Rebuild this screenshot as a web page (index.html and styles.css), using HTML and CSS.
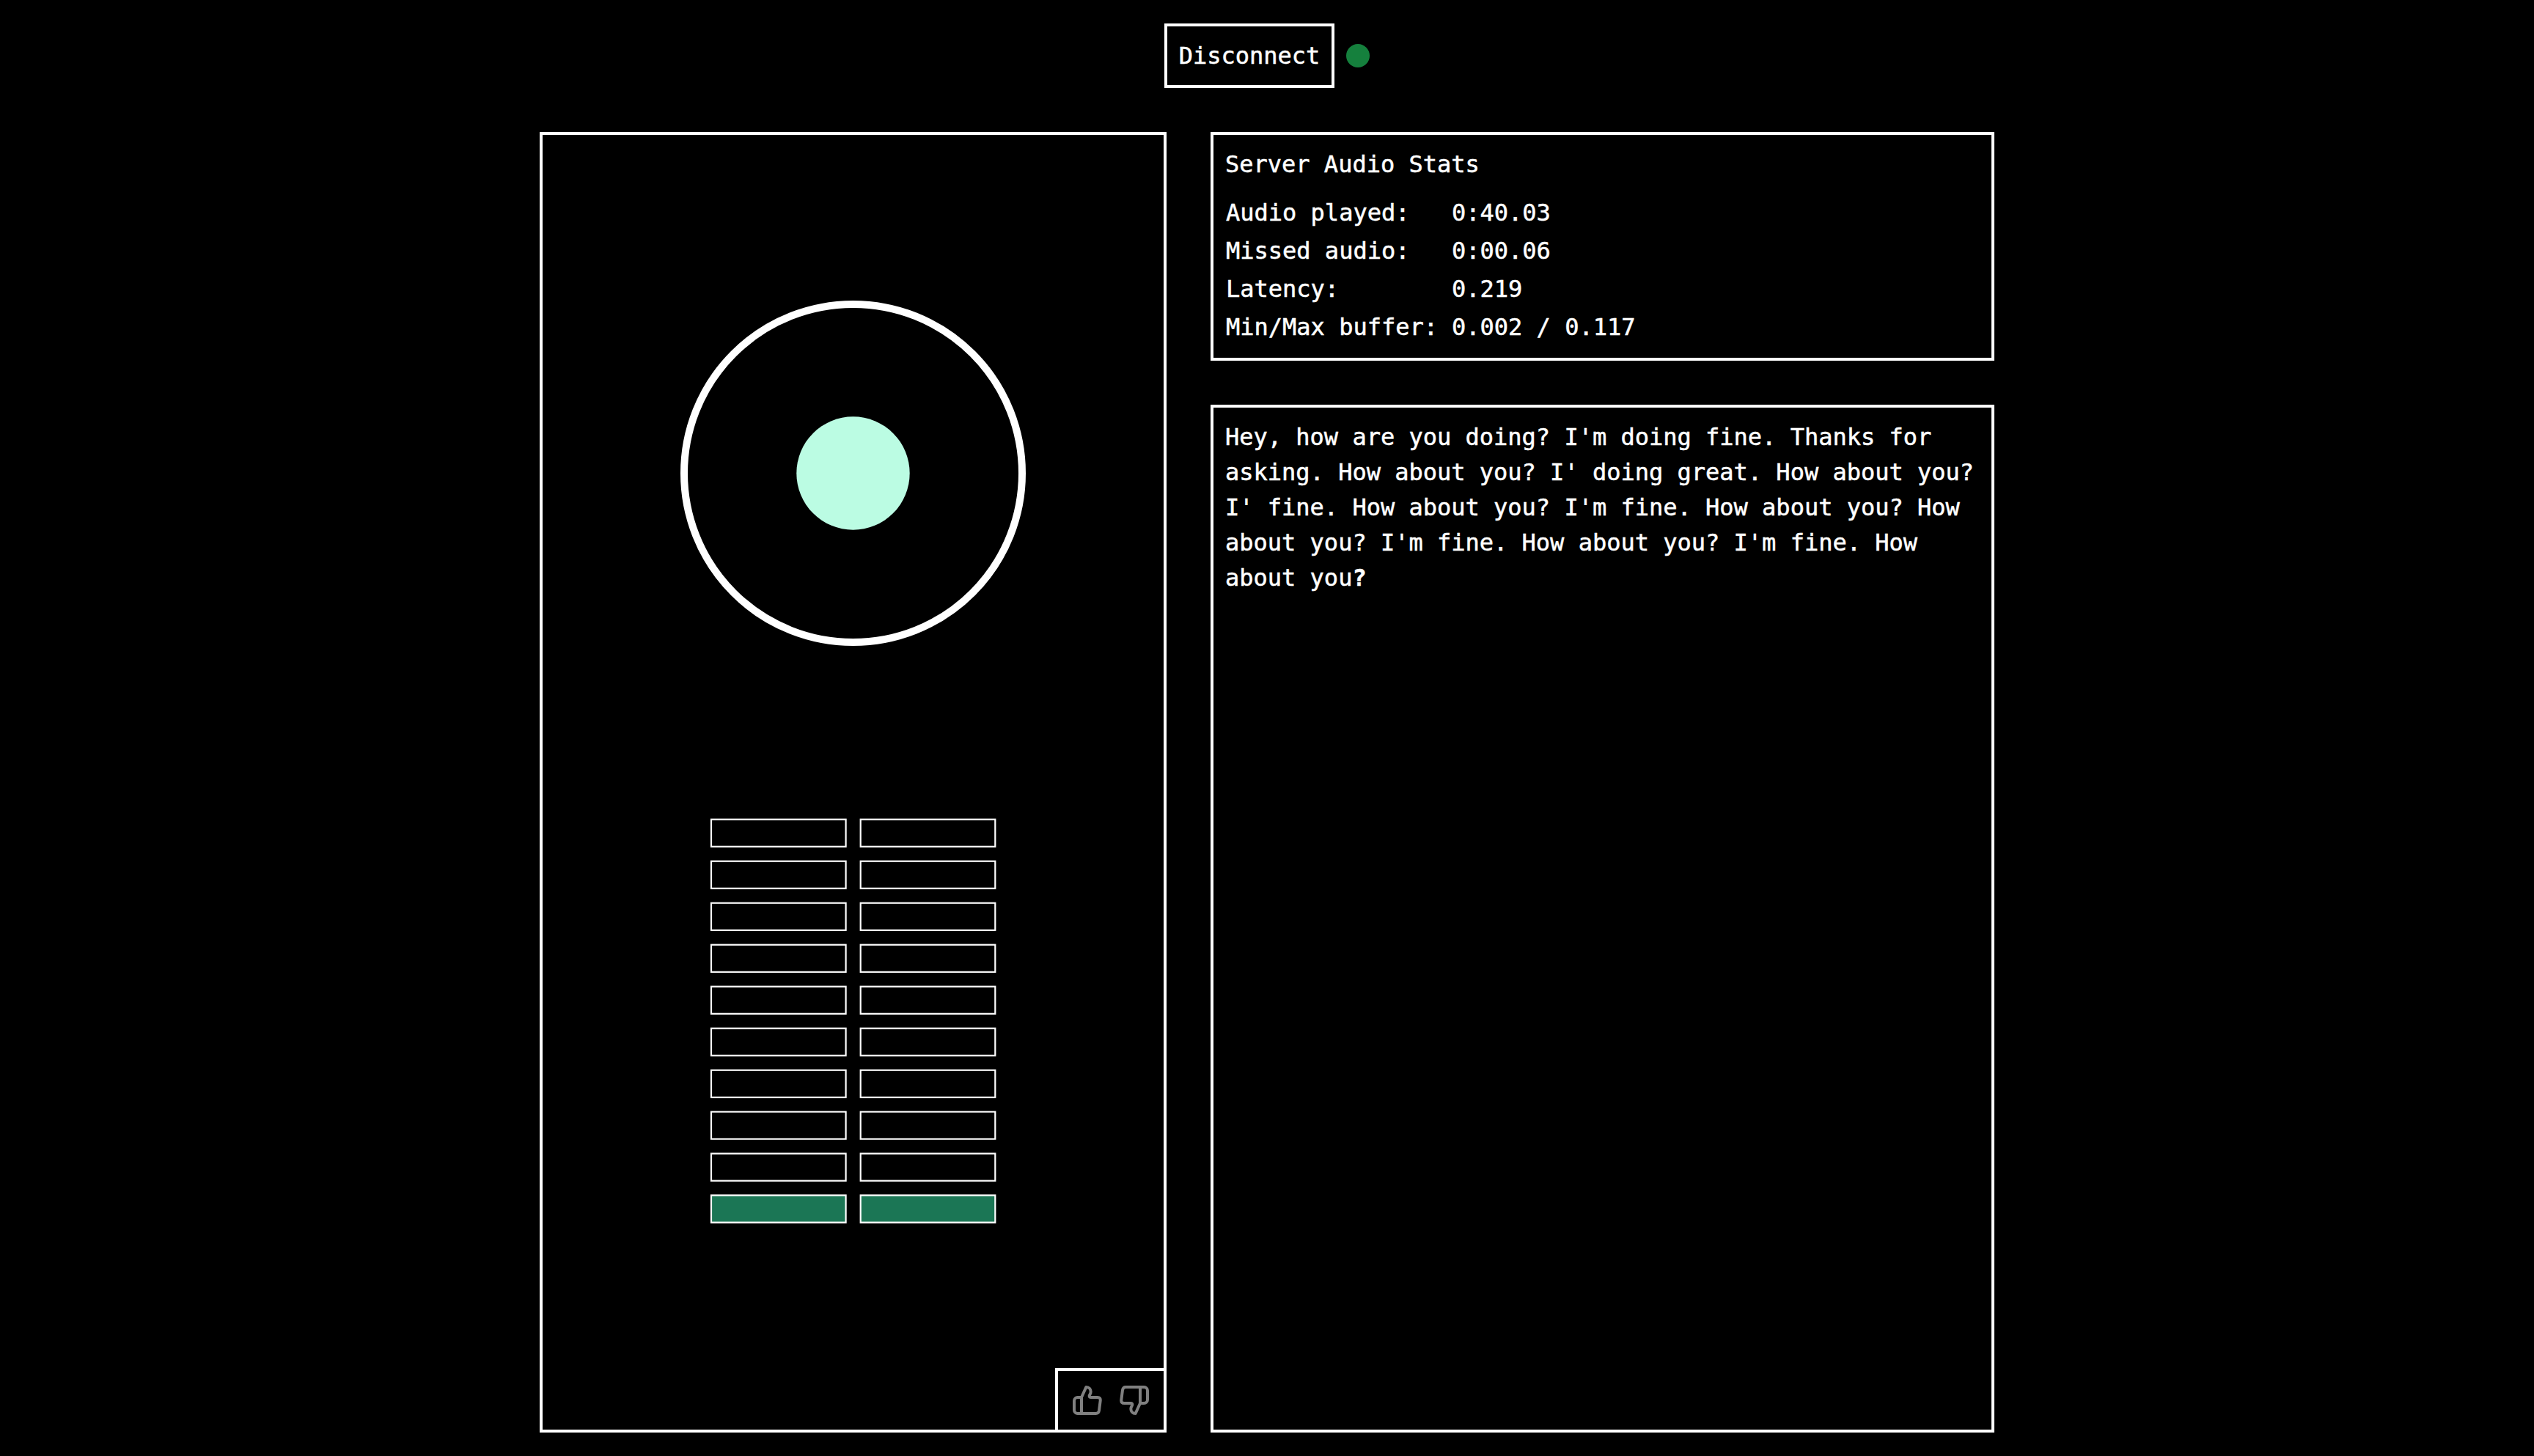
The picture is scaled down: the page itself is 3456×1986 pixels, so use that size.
FILE: index.html
```html
<!DOCTYPE html>
<html lang="en">
<head>
<meta charset="utf-8">
<title>Conversation</title>
<link rel="stylesheet" href="styles.css">
</head>
<body>
<header class="controls">
  <button class="connect" type="button">Disconnect</button>
  <span class="status"></span>
</header>
<main class="layout">
  <section class="panel visualizer">
    <svg class="orb" viewBox="0 0 472 472">
      <circle cx="235.5" cy="235.5" r="230.5" fill="none" stroke="#fff" stroke-width="10"/>
      <circle cx="235.5" cy="235.5" r="77.2" fill="#bbfce3"/>
    </svg>
    <svg class="meter" viewBox="0 0 392 556">
      <defs>
        <g id="row">
          <rect x="2" y="2.7" width="183.6" height="37.1"/>
          <rect x="205.7" y="2.7" width="183.6" height="37.1"/>
        </g>
      </defs>
      <g fill="none" stroke="#fff" stroke-width="2.2">
        <use href="#row"/>
        <use href="#row" y="57"/>
        <use href="#row" y="114"/>
        <use href="#row" y="171"/>
        <use href="#row" y="228"/>
        <use href="#row" y="285"/>
        <use href="#row" y="342"/>
        <use href="#row" y="398.8"/>
        <use href="#row" y="455.8"/>
        <use href="#row" y="512.7" fill="#1b7655"/>
      </g>
    </svg>
    <div class="feedback">
      <svg class="thumb" viewBox="0 0 120 120">
        <path d="M36 48V114M36 48L55 6C67 6 74 15 74 25C74 35 68 38 68 42Q68 48 75 48H101Q115 48 113 62L108 102Q106 114 95 114H20A14 14 0 0 1 6 100V62A14 14 0 0 1 20 48H36"/>
      </svg>
      <svg class="thumb thumb-down" viewBox="0 0 120 120">
        <path d="M36 48V114M36 48L55 6C67 6 74 15 74 25C74 35 68 38 68 42Q68 48 75 48H101Q115 48 113 62L108 102Q106 114 95 114H20A14 14 0 0 1 6 100V62A14 14 0 0 1 20 48H36"/>
      </svg>
    </div>
  </section>
  <div class="side">
    <section class="panel stats">
      <h2 class="stats-title">Server Audio Stats</h2>
      <dl class="stats-list">
        <dt>Audio played:</dt><dd>0:40.03</dd>
        <dt>Missed audio:</dt><dd>0:00.06</dd>
        <dt>Latency:</dt><dd>0.219</dd>
        <dt>Min/Max buffer:</dt><dd>0.002 / 0.117</dd>
      </dl>
    </section>
    <section class="panel transcript">Hey, how are you doing? I'm doing fine. Thanks for asking. How about you? I' doing great. How about you? I' fine. How about you? I'm fine. How about you? How about you? I'm fine. How about you? I'm fine. How about you<strong>?</strong></section>
  </div>
</main>
</body>
</html>
```
FILE: styles.css
```css
* {
  box-sizing: border-box;
  margin: 0;
  padding: 0;
}

body {
  height: 1986px;
  padding: 32px 736px;
  display: flex;
  flex-direction: column;
  gap: 60px;
  overflow: hidden;
  background: #000;
  color: #fff;
  font: 32px/48px Menlo, "DejaVu Sans Mono", monospace;
  -webkit-text-stroke: 0.5px #fff;
}

.controls {
  display: flex;
  align-items: center;
  justify-content: center;
  gap: 16px;
  height: 88px;
}

.connect {
  height: 88px;
  padding: 0 16px;
  border: 4px solid #fff;
  background: #000;
  color: #fff;
  font: inherit;
}

.status {
  width: 32px;
  height: 32px;
  border-radius: 50%;
  background: #15803d;
}

.layout {
  display: grid;
  grid-template-columns: 855px 1069px;
  gap: 60px;
  flex: 1;
}

.panel {
  border: 4px solid #fff;
}

.visualizer {
  display: flex;
  flex-direction: column;
  align-items: center;
  padding-top: 226px;
}

.orb {
  width: 472px;
  height: 472px;
  flex: none;
}

.meter {
  width: 392px;
  height: 556px;
  margin-top: 233px;
  flex: none;
}

.feedback {
  display: flex;
  gap: 24px;
  width: 148px;
  height: 84px;
  margin-top: auto;
  align-self: flex-end;
  padding: 20px;
  border: solid #fff;
  border-width: 4px 0 0 4px;
}

.thumb {
  width: 40px;
  height: 40px;
  flex: none;
  fill: none;
  stroke: #808080;
  stroke-width: 12;
  stroke-linejoin: round;
}

.thumb-down {
  transform: rotate(180deg);
}

.side {
  display: flex;
  flex-direction: column;
  gap: 60px;
}

.stats {
  height: 312px;
  padding: 16px;
}

.stats-title {
  margin-bottom: 18px;
  font-size: 32px;
  font-weight: 400;
}

.stats-list {
  display: grid;
  grid-template-columns: 308px 1fr;
  row-gap: 4px;
  padding-left: 1px;
}

.transcript {
  flex: 1;
  padding: 16px;
}
```
